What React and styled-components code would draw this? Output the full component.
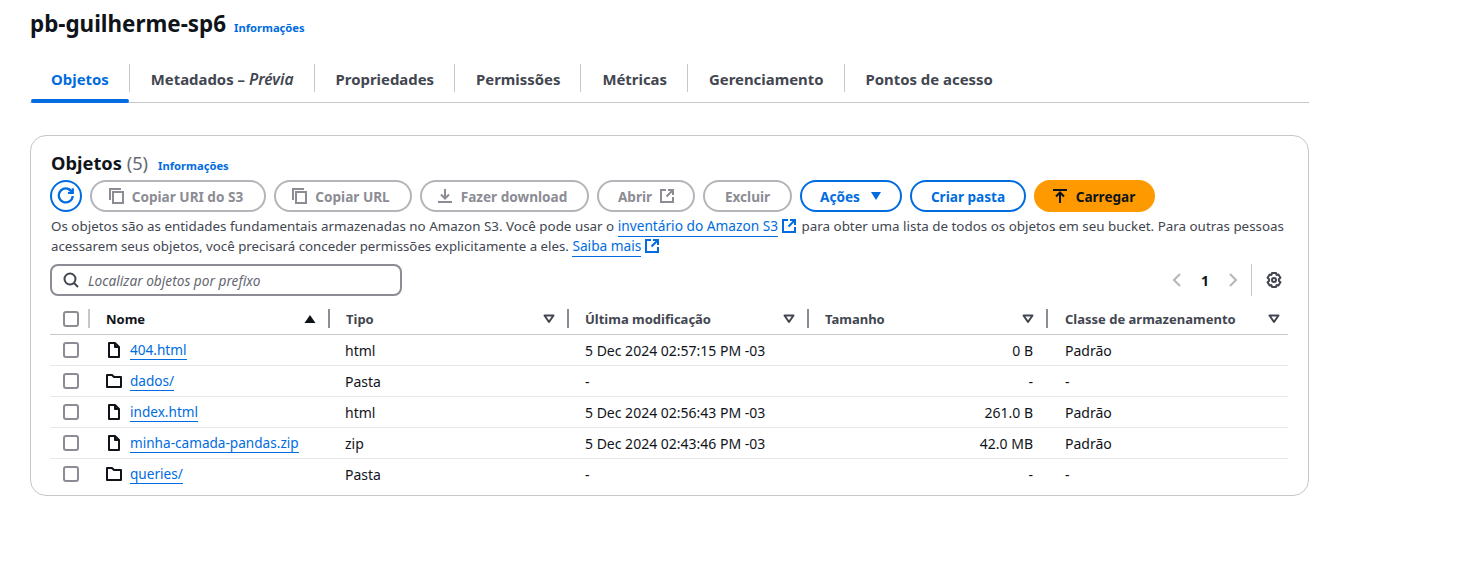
import React from "react";
import styled, { createGlobalStyle } from "styled-components";

const GlobalStyle = createGlobalStyle`
  html, body { margin: 0; padding: 0; background: #fff; }
  body { font-family: "Noto Sans", "Open Sans", sans-serif; color: #0f141a; font-size: 14px; }
`;

const BLUE = "#006ce0";
const GRID = "39px 240px 239px 240px 239px 241px";

const Page = styled.div`
  width: 1279px;
  height: 561px;
  padding: 10px 0 0 30px;
  overflow: hidden;
`;
const TitleRow = styled.div`
  display: flex;
  align-items: baseline;
  gap: 8px;
  height: 30px;
`;
const Title = styled.h1`
  margin: 0;
  font-size: 22.4px;
  line-height: 28px;
  font-weight: 700;
`;
const InfoLink = styled.a`
  color: ${BLUE};
  font-size: 11.2px;
  font-weight: 700;
`;
const TabBar = styled.div`
  display: flex;
  align-items: stretch;
  margin-top: 19px;
  height: 43px;
  border-bottom: 1px solid #c6c6cd;
`;
const Tab = styled.div`
  position: relative;
  display: flex;
  align-items: center;
  gap: 4px;
  padding: 0 21px 2px;
  height: 40px;
  font-size: 14.9px;
  font-weight: 700;
  color: ${(p) => (p.$active ? BLUE : "#424650")};
  em { font-size: 15.6px; font-weight: 600; font-style: italic; }
  &:not(:last-child)::before {
    content: "";
    position: absolute;
    right: 0;
    top: 5px;
    height: 28px;
    width: 1px;
    background: #c6c6cd;
  }
  ${(p) =>
    p.$active &&
    `&::after {
      content: "";
      position: absolute;
      left: 1px; right: 1px; bottom: -2px;
      height: 4px;
      border-radius: 2px;
      background: ${BLUE};
    }`}
`;
const Card = styled.section`
  box-sizing: border-box;
  margin-top: 32px;
  height: 361px;
  padding: 15px 20px 0 19px;
  border: 1px solid #c6c6cd;
  border-radius: 16px;
`;
const CardHead = styled.div`
  display: flex;
  align-items: baseline;
  gap: 10px;
  height: 29px;
  padding-left: 1px;
`;
const CardTitle = styled.h2`
  margin: 0;
  font-size: 18.3px;
  line-height: 24px;
  font-weight: 700;
  span { font-weight: 400; color: #656871; }
`;
const Toolbar = styled.div`
  display: flex;
  align-items: center;
  gap: 8px;
`;
const Button = styled.button`
  display: inline-flex;
  align-items: center;
  justify-content: center;
  gap: ${(p) => p.$gap || 8}px;
  box-sizing: border-box;
  height: 32px;
  padding: 0 ${(p) => p.$pr || 0}px 0 0;
  width: ${(p) => p.$w}px;
  border-radius: 16px;
  font: 700 13.6px "Noto Sans", sans-serif;
  white-space: nowrap;
  background: ${(p) => (p.$primary ? "#ff9900" : "#fff")};
  color: ${(p) => (p.$primary ? "#0f141a" : p.$normal ? BLUE : "#8c8c94")};
  border: 2px solid ${(p) => (p.$primary ? "#ff9900" : p.$normal ? BLUE : "#b4b4bb")};
`;
const Description = styled.p`
  margin: 4px 0 0;
  height: 40px;
  padding-left: 1px;
  font-size: 13.4px;
  line-height: 20px;
  color: #424650;
  width: 1240px;
`;
const SecondLine = styled.span`
  font-size: 13.28px;
`;
const TextLink = styled.a`
  color: ${BLUE};
  font-size: 13.7px;
  border-bottom: 1px solid ${BLUE};
  padding-bottom: 1px;
  margin-right: 4px;
`;
const FileLink = styled.a`
  color: ${BLUE};
  font-size: 13.6px;
  line-height: 18px;
  border-bottom: 1px solid ${BLUE};
  margin-top: 1px;
`;
const ExtIcon = styled.span`
  display: inline-flex;
  color: ${BLUE};
  vertical-align: -2px;
  margin-right: 2px;
`;
const FilterRow = styled.div`
  display: flex;
  align-items: center;
  justify-content: space-between;
  margin-top: 8px;
  height: 32px;
`;
const Search = styled.div`
  display: flex;
  align-items: center;
  gap: 9px;
  box-sizing: border-box;
  width: 352px;
  height: 32px;
  padding: 0 11px;
  border: 2px solid #8c8c94;
  border-radius: 8px;
  font-size: 13.7px;
  font-style: italic;
  color: #656871;
`;
const Pager = styled.div`
  display: flex;
  align-items: center;
  height: 34px;
  margin-right: 6px;
`;
const PageNum = styled.span`
  width: 40px;
  text-align: center;
  font-size: 14px;
  font-weight: 700;
  color: #0f141a;
`;
const PagerGear = styled.span`
  display: flex;
  align-items: center;
  height: 32px;
  margin-left: 10px;
  padding-left: 14px;
  border-left: 1px solid #c6c6cd;
`;
const Table = styled.div`
  margin-top: 9px;
  width: 1238px;
`;
const HeadRow = styled.div`
  display: grid;
  grid-template-columns: ${GRID};
  height: 29px;
  border-bottom: 1px solid #c6c6cd;
`;
const Row = styled.div`
  display: grid;
  grid-template-columns: ${GRID};
  height: 30px;
  border-bottom: ${(p) => (p.$last ? "none" : "1px solid #e8e8ea")};
  align-items: center;
`;
const HeadCell = styled.div`
  position: relative;
  display: flex;
  align-items: center;
  justify-content: space-between;
  padding: 0 13px 2px 17px;
  font-size: 13px;
  font-weight: 700;
  color: ${(p) => (p.$sorted ? "#0f141a" : "#424650")};
  &:last-child { padding-right: 8px; padding-left: 18px; }
  &::before {
    content: "";
    position: absolute;
    left: -1px;
    top: 4px;
    bottom: 6px;
    width: 2px;
    background: ${(p) => (p.$sorted ? "#c6c6cd" : "#8c8c94")};
  }
`;
const CheckCell = styled.div`
  display: flex;
  align-items: center;
  padding: 0 0 ${(p) => (p.$head ? 2 : 0)}px 13px;
`;
const Checkbox = styled.span`
  box-sizing: border-box;
  display: block;
  width: 16px;
  height: 16px;
  border: 2px solid #8c8c94;
  border-radius: 3px;
  background: #fff;
`;
const NameCell = styled.div`
  display: flex;
  align-items: center;
  gap: 8px;
  padding-left: 17px;
`;
const Cell = styled.div`
  padding: ${(p) => (p.$right ? "0 14px 0 0" : p.$date ? "0 16px 0 17px" : "0 16px")};
  font-size: 14px;
  color: #0f141a;
  text-align: ${(p) => (p.$right ? "right" : "left")};
  &:last-child { padding-left: 18px; }
`;

const stroke = { fill: "none", stroke: "currentColor", strokeWidth: 2 };

const CopyIcon = () => (
  <svg width="16" height="16" viewBox="0 0 16 16" {...stroke}>
    <path d="M2 12V1h11" />
    <path d="M5 4h10v11H5z" />
  </svg>
);
const DownloadIcon = () => (
  <svg width="16" height="16" viewBox="0 0 16 16" {...stroke}>
    <path d="M1 14h14M8 1v9M4 6.5l4 4 4-4" />
  </svg>
);
const UploadIcon = () => (
  <svg width="16" height="16" viewBox="0 0 16 16" {...stroke}>
    <path d="M1 2h14M8 15V5M4 8.5l4-4 4 4" />
  </svg>
);
const ExternalIcon = () => (
  <svg width="14" height="14" viewBox="0 0 14 14" {...stroke}>
    <path d="M6 1H1v12h12V8" />
    <path d="M8 1h5v5M13 1L6.5 7.5" />
  </svg>
);
const RefreshIcon = () => (
  <svg width="18" height="18" viewBox="0 0 16 16" {...stroke}>
    <path d="M13.5 5A6.2 6.2 0 1 0 14 8" />
    <path d="M14 1v4.2H9.8" />
  </svg>
);
const CaretDown = () => (
  <svg width="12" height="10" viewBox="0 0 12 10">
    <path d="M1 1h10L6 9z" fill={BLUE} />
  </svg>
);
const SortUp = () => (
  <svg width="12" height="10" viewBox="0 0 12 10">
    <path d="M0.5 9h11L6 1z" fill="#0f141a" />
  </svg>
);
const SortIdle = () => (
  <svg width="12" height="10" viewBox="0 0 12 10">
    <path d="M1.5 1.5h9L6 8z" fill="none" stroke="#424650" strokeWidth="2" strokeLinejoin="round" />
  </svg>
);
const SearchIcon = () => (
  <svg width="16" height="16" viewBox="0 0 16 16" fill="none" stroke="#424650" strokeWidth="2">
    <circle cx="7" cy="7" r="5.5" />
    <path d="M11 11l4 4" />
  </svg>
);
const Chevron = ({ dir }) => (
  <svg width="16" height="16" viewBox="0 0 16 16" fill="none" stroke="#b4b4bb" strokeWidth="2">
    <path d={dir === "left" ? "M11 2L5 8l6 6" : "M5 2l6 6-6 6"} />
  </svg>
);
const GearIcon = () => (
  <svg width="16" height="16" viewBox="0 0 16 16" fill="none" stroke="#424650" strokeWidth="2" strokeLinejoin="round">
    <path d="M6 1h4l.6 2 1.8-.6 2 3.400-1.500 1.400v1.600l1.500 1.400-2 3.400-1.800-.6-.6 2H6l-.6-2-1.800.6-2-3.400L3.100 8.800V7.200L1.600 5.800l2-3.400 1.800.6z" />
    <circle cx="8" cy="8" r="2" />
  </svg>
);
const FileIcon = () => (
  <svg width="16" height="16" viewBox="0 0 16 16" fill="none" stroke="#0f141a" strokeWidth="2" strokeLinejoin="round">
    <path d="M3 1h6l4 4v10H3z" />
    <path d="M9 1v4h4" />
  </svg>
);
const FolderIcon = () => (
  <svg width="16" height="16" viewBox="0 0 16 16" fill="none" stroke="#0f141a" strokeWidth="2" strokeLinejoin="round">
    <path d="M1 2h5l2 2h7v10H1z" />
  </svg>
);

const tabs = ["Objetos", null, "Propriedades", "Permissões", "Métricas", "Gerenciamento", "Pontos de acesso"];

const columns = ["Tipo", "Última modificação", "Tamanho", "Classe de armazenamento"];

const objects = [
  { name: "404.html", type: "html", date: "5 Dec 2024 02:57:15 PM -03", size: "0 B", cls: "Padrão" },
  { name: "dados/", type: "Pasta", date: "-", size: "-", cls: "-", folder: true },
  { name: "index.html", type: "html", date: "5 Dec 2024 02:56:43 PM -03", size: "261.0 B", cls: "Padrão" },
  { name: "minha-camada-pandas.zip", type: "zip", date: "5 Dec 2024 02:43:46 PM -03", size: "42.0 MB", cls: "Padrão" },
  { name: "queries/", type: "Pasta", date: "-", size: "-", cls: "-", folder: true },
];

export default function App() {
  return (
    <Page>
      <GlobalStyle />
      <TitleRow>
        <Title>pb-guilherme-sp6</Title>
        <InfoLink>Informações</InfoLink>
      </TitleRow>
      <TabBar>
        {tabs.map((t, i) =>
          t ? (
            <Tab key={i} $active={i === 0}>{t}</Tab>
          ) : (
            <Tab key={i}>Metadados – <em>Prévia</em></Tab>
          )
        )}
      </TabBar>
      <Card>
        <CardHead>
          <CardTitle>Objetos <span>(5)</span></CardTitle>
          <InfoLink>Informações</InfoLink>
        </CardHead>
        <Toolbar>
          <Button $w={32} $normal><RefreshIcon /></Button>
          <Button $w={176} $pr={5}><CopyIcon /> Copiar URI do S3</Button>
          <Button $w={138} $pr={5}><CopyIcon /> Copiar URL</Button>
          <Button $w={169} $pr={5}><DownloadIcon /> Fazer download</Button>
          <Button $w={98}>Abrir <ExternalIcon /></Button>
          <Button $w={89}>Excluir</Button>
          <Button $w={102} $normal $gap={10}>Ações <CaretDown /></Button>
          <Button $w={116} $normal>Criar pasta</Button>
          <Button $w={121} $primary $pr={2}><UploadIcon /> Carregar</Button>
        </Toolbar>
        <Description>
          Os objetos são as entidades fundamentais armazenadas no Amazon S3. Você pode usar o{" "}
          <TextLink>inventário do Amazon S3</TextLink>
          <ExtIcon><ExternalIcon /></ExtIcon>{" "}
          para obter uma lista de todos os objetos em seu bucket. Para outras pessoas{" "}
          <SecondLine>
            acessarem seus objetos, você precisará conceder permissões explicitamente a eles.
          </SecondLine>{" "}
          <TextLink>Saiba mais</TextLink>
          <ExtIcon><ExternalIcon /></ExtIcon>
        </Description>
        <FilterRow>
          <Search><SearchIcon /> Localizar objetos por prefixo</Search>
          <Pager>
            <Chevron dir="left" />
            <PageNum>1</PageNum>
            <Chevron dir="right" />
            <PagerGear><GearIcon /></PagerGear>
          </Pager>
        </FilterRow>
        <Table>
          <HeadRow>
            <CheckCell $head><Checkbox /></CheckCell>
            <HeadCell $sorted>Nome <SortUp /></HeadCell>
            {columns.map((c) => (
              <HeadCell key={c}>{c} <SortIdle /></HeadCell>
            ))}
          </HeadRow>
          {objects.map((o, i) => (
            <Row key={o.name} $last={i === objects.length - 1}>
              <CheckCell><Checkbox /></CheckCell>
              <NameCell>
                {o.folder ? <FolderIcon /> : <FileIcon />}
                <FileLink>{o.name}</FileLink>
              </NameCell>
              <Cell>{o.type}</Cell>
              <Cell $date>{o.date}</Cell>
              <Cell $right>{o.size}</Cell>
              <Cell>{o.cls}</Cell>
            </Row>
          ))}
        </Table>
      </Card>
    </Page>
  );
}
